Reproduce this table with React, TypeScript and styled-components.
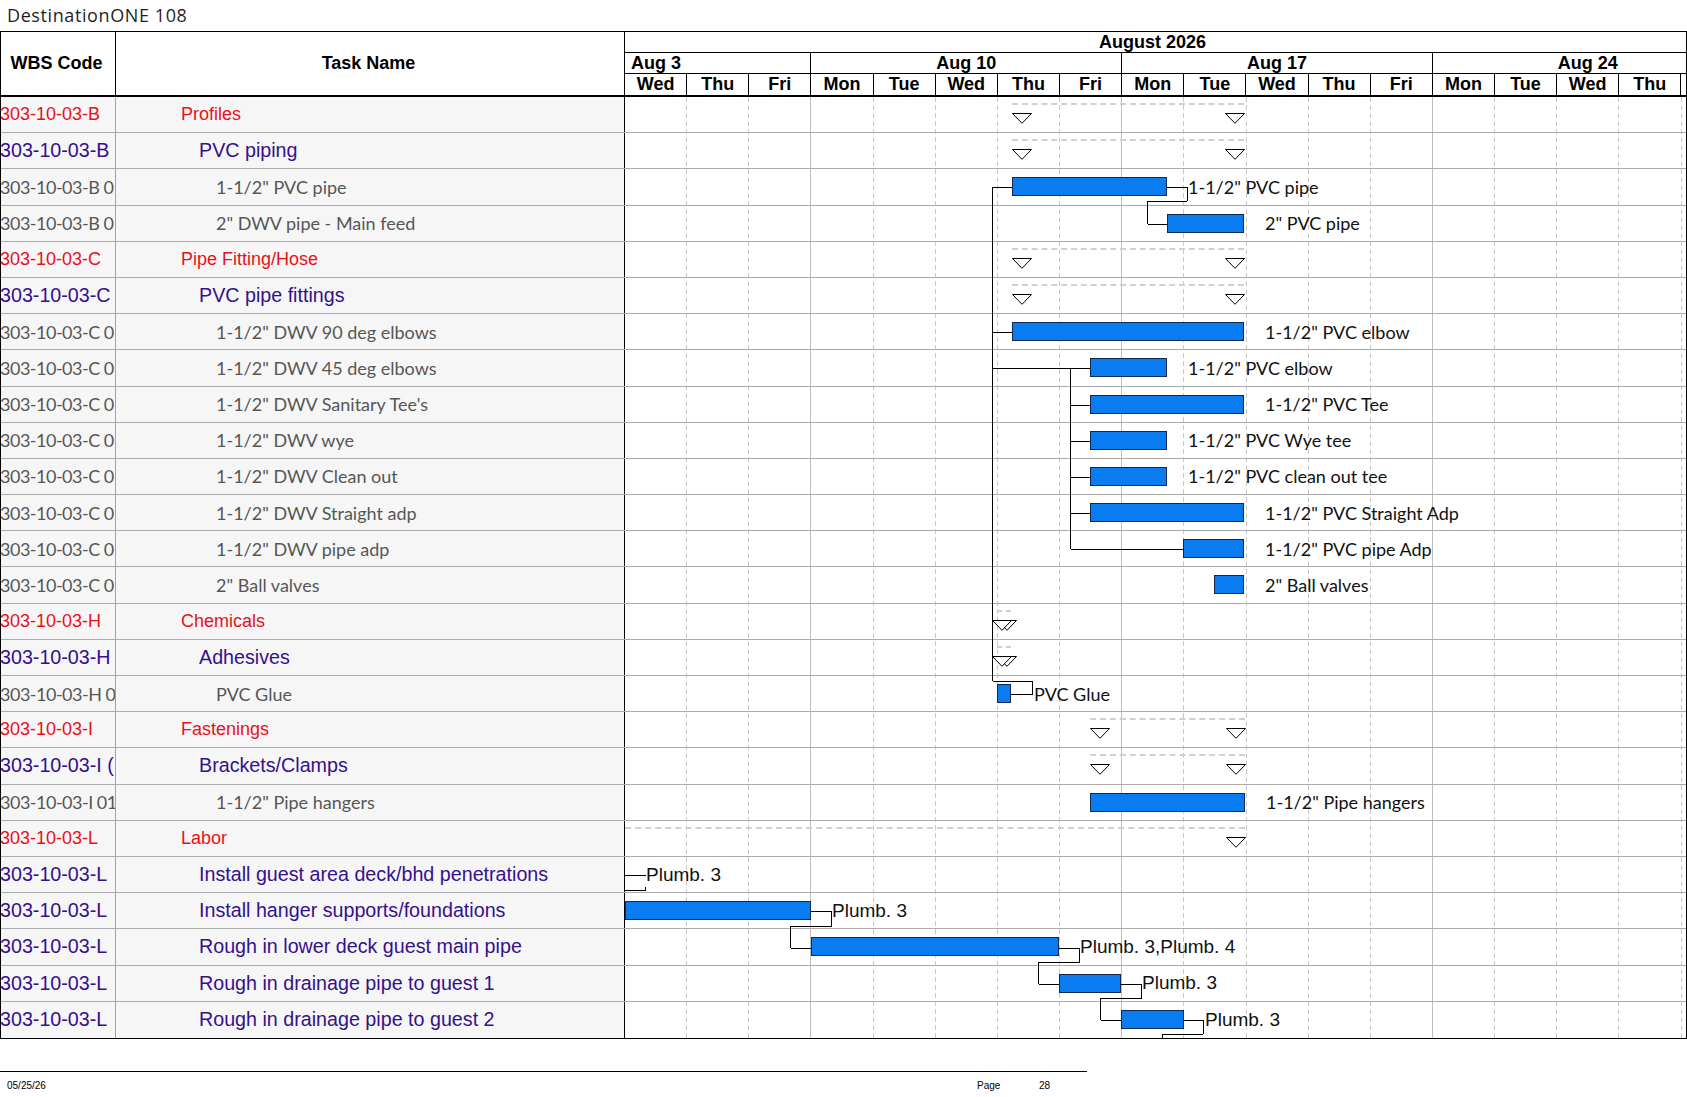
import React from 'react';
import styled, { createGlobalStyle, css } from 'styled-components';

// page geometry (px, taken from the printed view)
const ROW_H = 36.2;
const DAY_W = 62.15;
const CHART_X = 625; // page x where the timescale content starts
const BODY_Y = 96; // page y where the task rows start
const DAYS = 17;

const GlobalStyle = createGlobalStyle`
  html, body {
    margin: 0;
    padding: 0;
    background: #fff;
  }
  body {
    font-family: 'Liberation Sans', Arial, sans-serif;
    color: #000;
  }
`;

type Kind = 'group' | 'sub' | 'item';

interface Task {
  wbs: string;
  name: string;
  kind: Kind;
  summary?: { s: number; e: number; noStart?: boolean };
  bar?: { s: number; e: number };
  label?: string;
  labelX?: number;
  plumb?: boolean;
}

const tasks: Task[] = [
  { wbs: '303-10-03-B', name: 'Profiles', kind: 'group', summary: { s: 1012, e: 1244 } },
  { wbs: '303-10-03-B', name: 'PVC piping', kind: 'sub', summary: { s: 1012, e: 1244 } },
  { wbs: '303-10-03-B 0', name: '1-1/2" PVC pipe', kind: 'item', bar: { s: 1012, e: 1167 }, label: '1-1/2" PVC pipe' },
  { wbs: '303-10-03-B 0', name: '2" DWV pipe - Main feed', kind: 'item', bar: { s: 1167, e: 1244 }, label: '2" PVC pipe' },
  { wbs: '303-10-03-C', name: 'Pipe Fitting/Hose', kind: 'group', summary: { s: 1012, e: 1244 } },
  { wbs: '303-10-03-C', name: 'PVC pipe fittings', kind: 'sub', summary: { s: 1012, e: 1244 } },
  { wbs: '303-10-03-C 0', name: '1-1/2" DWV 90 deg elbows', kind: 'item', bar: { s: 1012, e: 1244 }, label: '1-1/2" PVC elbow' },
  { wbs: '303-10-03-C 0', name: '1-1/2" DWV 45 deg elbows', kind: 'item', bar: { s: 1090, e: 1167 }, label: '1-1/2" PVC elbow' },
  { wbs: '303-10-03-C 0', name: "1-1/2\" DWV Sanitary Tee's", kind: 'item', bar: { s: 1090, e: 1244 }, label: '1-1/2" PVC Tee' },
  { wbs: '303-10-03-C 0', name: '1-1/2" DWV wye', kind: 'item', bar: { s: 1090, e: 1167 }, label: '1-1/2" PVC Wye tee' },
  { wbs: '303-10-03-C 0', name: '1-1/2" DWV Clean out', kind: 'item', bar: { s: 1090, e: 1167 }, label: '1-1/2" PVC clean out tee' },
  { wbs: '303-10-03-C 0', name: '1-1/2" DWV Straight adp', kind: 'item', bar: { s: 1090, e: 1244 }, label: '1-1/2" PVC Straight Adp' },
  { wbs: '303-10-03-C 0', name: '1-1/2" DWV pipe adp', kind: 'item', bar: { s: 1183, e: 1244 }, label: '1-1/2" PVC pipe Adp' },
  { wbs: '303-10-03-C 0', name: '2" Ball valves', kind: 'item', bar: { s: 1214, e: 1244 }, label: '2" Ball valves' },
  { wbs: '303-10-03-H', name: 'Chemicals', kind: 'group', summary: { s: 997, e: 1011 } },
  { wbs: '303-10-03-H', name: 'Adhesives', kind: 'sub', summary: { s: 997, e: 1011 } },
  { wbs: '303-10-03-H 0', name: 'PVC Glue', kind: 'item', bar: { s: 997, e: 1011 }, label: 'PVC Glue', labelX: 1034 },
  { wbs: '303-10-03-I', name: 'Fastenings', kind: 'group', summary: { s: 1090, e: 1245 } },
  { wbs: '303-10-03-I (', name: 'Brackets/Clamps', kind: 'sub', summary: { s: 1090, e: 1245 } },
  { wbs: '303-10-03-I 01', name: '1-1/2" Pipe hangers', kind: 'item', bar: { s: 1090, e: 1245 }, label: '1-1/2" Pipe hangers' },
  { wbs: '303-10-03-L', name: 'Labor', kind: 'group', summary: { s: 625, e: 1245, noStart: true } },
  { wbs: '303-10-03-L', name: 'Install guest area deck/bhd penetrations', kind: 'sub', label: 'Plumb. 3', labelX: 646, plumb: true },
  { wbs: '303-10-03-L', name: 'Install hanger supports/foundations', kind: 'sub', bar: { s: 625, e: 811 }, label: 'Plumb. 3', plumb: true },
  { wbs: '303-10-03-L', name: 'Rough in lower deck guest main pipe', kind: 'sub', bar: { s: 811, e: 1059 }, label: 'Plumb. 3,Plumb. 4', plumb: true },
  { wbs: '303-10-03-L', name: 'Rough in drainage pipe to guest 1', kind: 'sub', bar: { s: 1059, e: 1121 }, label: 'Plumb. 3', plumb: true },
  { wbs: '303-10-03-L', name: 'Rough in drainage pipe to guest 2', kind: 'sub', bar: { s: 1121, e: 1184 }, label: 'Plumb. 3', plumb: true },
];

const days = ['Wed', 'Thu', 'Fri', 'Mon', 'Tue', 'Wed', 'Thu', 'Fri', 'Mon', 'Tue', 'Wed', 'Thu', 'Fri', 'Mon', 'Tue', 'Wed', 'Thu'];
const weeks = [
  { label: 'Aug 3', span: 3, pad: 6 },
  { label: 'Aug 10', span: 5, pad: 0 },
  { label: 'Aug 17', span: 5, pad: 0 },
  { label: 'Aug 24', span: 5, pad: 125, last: true },
];
const weekEdges = [3, 8, 13];

// row centre line for link drawing, snapped to a pixel
const cy = (i: number) => Math.round(BODY_Y + ROW_H * i + 18) + 0.5;

const links = [
  `M992.5 ${cy(2)} V680.5 H1032.5 V${cy(16)} H1011`,
  `M992.5 ${cy(2)} H1012`,
  `M992.5 ${cy(6)} H1012`,
  `M992.5 ${cy(7)} H1090`,
  `M1167 ${cy(2)} H1187.5 V200.5 H1147.5 V${cy(3)} H1167`,
  `M1070.5 ${cy(7)} V${cy(12)} H1183`,
  `M1070.5 ${cy(8)} H1090`,
  `M1070.5 ${cy(9)} H1090`,
  `M1070.5 ${cy(10)} H1090`,
  `M1070.5 ${cy(11)} H1090`,
  `M625 ${cy(21)} H646`,
  `M625 889.5 H645.5 V886`,
  `M811 ${cy(22)} H831.5 V925.5 H790.5 V${cy(23)} H811`,
  `M1059 ${cy(23)} H1079.5 V961.5 H1038.5 V${cy(24)} H1059`,
  `M1121 ${cy(24)} H1141.5 V997.5 H1100.5 V${cy(25)} H1121`,
  `M1184 ${cy(25)} H1203.5 V1033.5 H1162.5 V1040`,
];

const kindText = {
  group: css`
    font-family: 'Liberation Sans', Arial, sans-serif;
    font-size: 18px;
    color: #e8101a;
  `,
  sub: css`
    font-family: 'Liberation Sans', Arial, sans-serif;
    font-size: 19.7px;
    color: #35108c;
  `,
  item: css`
    font-family: Lato, 'Liberation Sans', sans-serif;
    font-size: 18px;
    color: #565656;
  `,
};

const indent = { group: 65, sub: 83, item: 100 };

const App = () => {
  const bodyH = ROW_H * tasks.length;
  return (
    <>
      <GlobalStyle />
      <Page>
        <Title>DestinationONE 108</Title>
        <Table>
          <Header>
            <HeadCell>WBS Code</HeadCell>
            <HeadCell>Task Name</HeadCell>
            <Timescale>
              <MonthRow>August 2026</MonthRow>
              <Tier>
                {weeks.map((w) => (
                  <WeekCell key={w.label} $span={w.span} $pad={w.pad} $last={w.last}>
                    {w.label}
                  </WeekCell>
                ))}
              </Tier>
              <Tier>
                {days.map((d, i) => (
                  <DayCell key={i}>{d}</DayCell>
                ))}
                <DayCell $partial />
              </Tier>
            </Timescale>
          </Header>

          <Body>
            <GridLines width={1061} height={bodyH} viewBox={`${CHART_X} ${BODY_Y} 1061 ${bodyH}`}>
              {Array.from({ length: DAYS }, (_, k) => {
                const x = Math.round(CHART_X - 1 + (k + 1) * DAY_W) + 0.5;
                const solid = weekEdges.includes(k + 1);
                return (
                  <line
                    key={k}
                    x1={x}
                    x2={x}
                    y1={BODY_Y}
                    y2={BODY_Y + bodyH}
                    stroke={solid ? '#bdbdbd' : '#c8c8c8'}
                    strokeDasharray={solid ? undefined : '5 3'}
                  />
                );
              })}
            </GridLines>

            {tasks.map((t, i) => (
              <Row key={i}>
                <WbsCell $kind={t.kind}>{t.wbs}</WbsCell>
                <NameCell $kind={t.kind}>{t.name}</NameCell>
                <ChartCell>
                  {t.summary && (
                    <>
                      <SummaryLine $left={t.summary.s - CHART_X} $width={t.summary.e - t.summary.s} />
                      {!t.summary.noStart && <Marker $left={t.summary.s - CHART_X} />}
                      <Marker $left={t.summary.e - CHART_X - 19} />
                    </>
                  )}
                  {t.bar && <Bar $left={t.bar.s - CHART_X} $width={t.bar.e - t.bar.s} />}
                  {t.label && (
                    <BarLabel $left={(t.labelX ?? (t.bar ? t.bar.e + 21 : 0)) - CHART_X} $plumb={t.plumb}>
                      {t.label}
                    </BarLabel>
                  )}
                </ChartCell>
              </Row>
            ))}

            <Links width={1061} height={bodyH} viewBox={`${CHART_X} ${BODY_Y} 1061 ${bodyH}`}>
              {links.map((d, i) => (
                <path key={i} d={d} />
              ))}
            </Links>
          </Body>
        </Table>

        <Footer>
          <span>05/25/26</span>
          <span>Page</span>
          <span>28</span>
        </Footer>
      </Page>
    </>
  );
};

const Marker = ({ $left }: { $left: number }) => (
  <MarkerSvg $left={$left} width="20" height="11" viewBox="0 0 20 11">
    <polygon points="0.5,0.5 19.5,0.5 10,10.3" fill="#fff" stroke="#000" strokeWidth="1" />
  </MarkerSvg>
);

export default App;

const Page = styled.div`
  width: 1687px;
  height: 1097px;
  overflow: hidden;
  background: #fff;
`;

const Title = styled.div`
  height: 31px;
  line-height: 30px;
  padding-left: 7px;
  font-family: 'Open Sans', 'DejaVu Sans', sans-serif;
  font-size: 18px;
  letter-spacing: 0.6px;
  color: #1f1f1f;
`;

const Table = styled.div`
  width: 1687px;
  box-sizing: border-box;
  border: 1px solid #000;
`;

const Header = styled.div`
  display: grid;
  grid-template-columns: 115px 509px 1fr;
  height: 65px;
  box-sizing: border-box;
  border-bottom: 2px solid #000;
`;

const HeadCell = styled.div`
  display: flex;
  align-items: center;
  justify-content: center;
  border-right: 1px solid #000;
  font-weight: bold;
  font-size: 18px;
  padding-right: 3px;
`;

const Timescale = styled.div`
  display: grid;
  grid-template-rows: 21px 21px 21px;
  font-weight: bold;
  font-size: 18px;
  line-height: 20px;
`;

const MonthRow = styled.div`
  text-align: center;
  padding-right: 6px;
  border-bottom: 1px solid #000;
`;

const Tier = styled.div`
  display: grid;
  grid-template-columns: repeat(${DAYS}, ${DAY_W}px) 1fr;
`;

const WeekCell = styled.div<{ $span: number; $pad: number; $last?: boolean }>`
  grid-column: span ${(p) => p.$span};
  border-bottom: 1px solid #000;
  border-right: ${(p) => (p.$last ? 'none' : '1px solid #000')};
  text-align: ${(p) => (p.$pad ? 'left' : 'center')};
  padding-left: ${(p) => p.$pad}px;
  white-space: nowrap;
  overflow: hidden;
`;

const DayCell = styled.div<{ $partial?: boolean }>`
  border-right: ${(p) => (p.$partial ? 'none' : '1px solid #000')};
  text-align: center;
  overflow: hidden;
`;

const Body = styled.div`
  position: relative;
  z-index: 0;
`;

const GridLines = styled.svg`
  position: absolute;
  left: 624px;
  top: 0;
  z-index: -1;
  shape-rendering: crispEdges;
`;

const Links = styled.svg`
  position: absolute;
  left: 624px;
  top: 0;
  fill: none;
  stroke: #000;
  stroke-width: 1px;
  shape-rendering: crispEdges;
  pointer-events: none;
`;

const Row = styled.div`
  display: grid;
  grid-template-columns: 115px 509px 1fr;
  height: ${ROW_H}px;
  box-sizing: border-box;
  border-bottom: 1px solid #ababab;

  &:last-of-type {
    border-bottom: none;
  }
`;

const WbsCell = styled.div<{ $kind: Kind }>`
  display: flex;
  align-items: center;
  overflow: hidden;
  white-space: nowrap;
  text-indent: -1px;
  background: #f6f6f6;
  border-right: 1px solid #a3a3a3;
  ${(p) => kindText[p.$kind]}
  ${(p) =>
    p.$kind === 'item' &&
    css`
      letter-spacing: -0.5px;
    `}
`;

const NameCell = styled.div<{ $kind: Kind }>`
  display: flex;
  align-items: center;
  overflow: hidden;
  white-space: nowrap;
  padding-left: ${(p) => indent[p.$kind]}px;
  background: #f6f6f6;
  border-right: 1px solid #000;
  ${(p) => kindText[p.$kind]}
`;

const ChartCell = styled.div`
  position: relative;
`;

const SummaryLine = styled.div<{ $left: number; $width: number }>`
  position: absolute;
  top: 6px;
  left: ${(p) => p.$left}px;
  width: ${(p) => p.$width}px;
  border-top: 2px dashed #d0d0d0;
`;

const MarkerSvg = styled.svg<{ $left: number }>`
  position: absolute;
  top: 16px;
  left: ${(p) => p.$left}px;
`;

const Bar = styled.div<{ $left: number; $width: number }>`
  position: absolute;
  top: 8px;
  height: 19px;
  left: ${(p) => p.$left}px;
  width: ${(p) => p.$width}px;
  box-sizing: border-box;
  background: #0a7cf2;
  border: 1px solid #14284f;
`;

const BarLabel = styled.div<{ $left: number; $plumb?: boolean }>`
  position: absolute;
  top: 0;
  bottom: 0;
  left: ${(p) => p.$left}px;
  display: flex;
  align-items: center;
  white-space: nowrap;
  color: #111;
  ${(p) =>
    p.$plumb
      ? css`
          font-family: 'Liberation Sans', Arial, sans-serif;
          font-size: 19px;
        `
      : css`
          font-family: Lato, 'Liberation Sans', sans-serif;
          font-size: 18px;
        `}
`;

const Footer = styled.div`
  margin-top: 32px;
  width: 1087px;
  border-top: 1px solid #000;
  padding-top: 8px;
  display: grid;
  grid-template-columns: 977px 62px 1fr;
  font-family: 'Liberation Sans', Arial, sans-serif;
  font-size: 10px;
  line-height: 12px;

  & > span:first-child {
    padding-left: 7px;
  }
`;
